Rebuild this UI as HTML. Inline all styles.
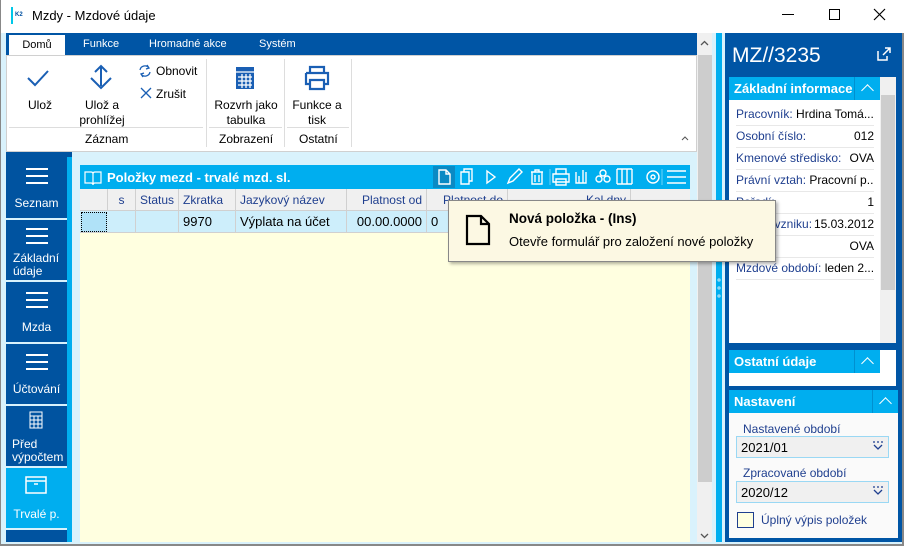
<!DOCTYPE html>
<html><head><meta charset="utf-8"><style>
*{box-sizing:border-box;margin:0;padding:0}
body{width:904px;height:546px;overflow:hidden;background:#fff;font-family:"Liberation Sans",sans-serif;font-size:12px;color:#000;position:relative}
.a{position:absolute}
.nav{left:6px;width:61px;background:#0053a0;color:#fff;text-align:center;font-size:12px;border-bottom:2px solid #d9f2fc}
.lines{position:absolute;left:20px;width:22px;height:16px;border-top:2px solid #fff;border-bottom:2px solid #fff}
.lines:after{content:"";position:absolute;left:0;right:0;top:5px;border-top:2px solid #fff}
.th{position:absolute;top:189px;height:22px;line-height:22px;color:#1f3f8f;border-right:1px solid #d0d0d0;padding:0 4px;font-size:12px}
.td{position:absolute;top:211px;height:22px;line-height:22px;border-right:1px solid #d0d0d0;padding:0 4px;font-size:13px}
.lbl{position:absolute;left:736px;width:138px;height:22px;line-height:20px;border-bottom:1px solid #e8e8e8;font-size:12px;white-space:nowrap;overflow:hidden}
.lbl span{color:#1f3f8f}
.lbl b{font-weight:normal;position:absolute;right:0}
.sh{position:absolute;left:729px;height:23px;background:#00aeef;color:#fff;font-weight:bold;font-size:13px;line-height:23px;padding-left:5px}
.chev{position:absolute;right:0;top:0;width:26px;height:23px;border-left:1px solid #0090d0}
.chev:after{content:"";position:absolute;left:8px;top:9px;width:8px;height:8px;border-left:1.5px solid #fff;border-top:1.5px solid #fff;transform:rotate(45deg)}
</style></head><body>
<!-- title bar -->
<div class="a" style="left:0;top:0;width:904px;height:33px;background:#fff;border-left:1px solid #888"></div>
<div class="a" style="left:11px;top:7px;width:15px;height:17px;border-left:2px solid #00c8e8;font-size:6px;font-weight:bold;color:#0050a0;padding-left:2px;line-height:17px">K2</div>
<div class="a" style="left:32px;top:8px;font-size:13px">Mzdy - Mzdové údaje</div>
<div class="a" style="left:782px;top:14px;width:12px;border-top:1px solid #000"></div>
<div class="a" style="left:829px;top:9px;width:11px;height:11px;border:1px solid #000"></div>
<svg class="a" style="left:873px;top:8px" width="13" height="13"><path d="M1 1L12 12M12 1L1 12" stroke="#000" stroke-width="1.2"/></svg>
<div class="a" style="left:0;top:33px;width:904px;height:513px;background:#d9f2fc;border-left:1px solid #888;border-right:2px solid #888;border-bottom:2px solid #888"></div>
<!-- ribbon -->
<div class="a" style="left:6px;top:33px;width:691px;height:22px;background:#0055a5"></div>
<div class="a" style="left:9px;top:35px;width:56px;height:20px;background:#fff;text-align:center;line-height:20px;font-size:11px">Domů</div>
<div class="a" style="left:83px;top:38px;color:#fff;font-size:11px">Funkce</div>
<div class="a" style="left:149px;top:38px;color:#fff;font-size:11px">Hromadné akce</div>
<div class="a" style="left:259px;top:38px;color:#fff;font-size:11px">Systém</div>
<div class="a" style="left:6px;top:55px;width:691px;height:97px;background:#fff;border:1px solid #d0d0d0"></div>
<svg class="a" style="left:26px;top:68px" width="24" height="20"><path d="M2 10 L9 17 L22 3" stroke="#1a5fb4" stroke-width="2" fill="none"/></svg>
<div class="a" style="left:28px;top:98px;font-size:12px">Ulož</div>
<svg class="a" style="left:89px;top:64px" width="24" height="28"><path d="M12 2 V22 M6 8 L12 2 L18 8 M2 14 L12 24 L22 14" stroke="#1a5fb4" stroke-width="2" fill="none"/></svg>
<div class="a" style="left:78px;top:98px;font-size:12px;text-align:center;width:48px;line-height:15px">Ulož a prohlížej</div>
<svg class="a" style="left:138px;top:64px" width="14" height="14"><path d="M2 6A5 5 0 0 1 11 4M12 8A5 5 0 0 1 3 10M9 1L11 4L8 5M5 13L3 10L6 9" stroke="#1a5fb4" stroke-width="1.3" fill="none"/></svg>
<div class="a" style="left:156px;top:64px">Obnovit</div>
<svg class="a" style="left:140px;top:87px" width="12" height="12"><path d="M1 1L11 11M11 1L1 11" stroke="#1a5fb4" stroke-width="1.3"/></svg>
<div class="a" style="left:156px;top:87px">Zrušit</div>
<div class="a" style="left:9px;top:127px;width:194px;border-top:1px solid #ddd"></div>
<div class="a" style="left:85px;top:132px">Záznam</div>
<div class="a" style="left:206px;top:59px;height:88px;border-left:1px solid #ddd"></div>
<svg class="a" style="left:235px;top:66px" width="20" height="24"><rect x="1" y="1" width="18" height="22" fill="#1a5fb4"/><path d="M1 6H19 M3 11H17 M3 15H17 M3 19H17 M7 8V22 M11 8V22 M15 8V22" stroke="#fff" stroke-width="1.3"/></svg>
<div class="a" style="left:212px;top:98px;width:68px;text-align:center;line-height:15px">Rozvrh jako tabulka</div>
<div class="a" style="left:209px;top:127px;width:73px;border-top:1px solid #ddd"></div>
<div class="a" style="left:219px;top:132px">Zobrazení</div>
<div class="a" style="left:284px;top:59px;height:88px;border-left:1px solid #ddd"></div>
<svg class="a" style="left:303px;top:65px" width="28" height="26"><path d="M7 8V2H21V8 M3 8H25V19H21 M7 19H3V8 M7 15H21V24H7Z" stroke="#1a5fb4" stroke-width="2.2" fill="none"/></svg>
<div class="a" style="left:288px;top:98px;width:58px;text-align:center;line-height:15px">Funkce a tisk</div>
<div class="a" style="left:287px;top:127px;width:62px;border-top:1px solid #ddd"></div>
<div class="a" style="left:299px;top:132px">Ostatní</div>
<div class="a" style="left:351px;top:59px;height:88px;border-left:1px solid #ddd"></div>
<svg class="a" style="left:681px;top:135px" width="8" height="6"><path d="M1 5L4 2L7 5" stroke="#555" fill="none"/></svg>
<!-- scrollbar -->
<div class="a" style="left:697px;top:33px;width:15px;height:509px;background:#f0f0f0"></div>
<div class="a" style="left:698px;top:55px;width:14px;height:427px;background:#cdcdcd"></div>
<svg class="a" style="left:700px;top:40px" width="9" height="6"><path d="M1 5L4.5 1.5L8 5" stroke="#555" stroke-width="1.3" fill="none"/></svg>
<svg class="a" style="left:700px;top:533px" width="9" height="6"><path d="M1 1L4.5 4.5L8 1" stroke="#555" stroke-width="1.3" fill="none"/></svg>
<!-- left nav -->
<div class="a" style="left:6px;top:152px;width:66px;height:6px;background:#0053a0"></div>
<div class="a" style="left:67px;top:157px;width:5px;height:385px;background:#00aeef"></div>
<div class="a nav" style="top:158px;height:62px"><div class="lines" style="top:10px"></div><div style="position:absolute;top:38px;width:100%">Seznam</div></div>
<div class="a nav" style="top:220px;height:62px;text-align:left;padding-left:7px"><div class="lines" style="top:8px"></div><div style="position:absolute;top:32px;line-height:13px">Základní<br>údaje</div></div>
<div class="a nav" style="top:282px;height:62px"><div class="lines" style="top:10px"></div><div style="position:absolute;top:38px;width:100%">Mzda</div></div>
<div class="a nav" style="top:344px;height:62px"><div class="lines" style="top:10px"></div><div style="position:absolute;top:38px;width:100%">Účtování</div></div>
<div class="a nav" style="top:406px;height:62px;text-align:left;padding-left:6px"><svg style="position:absolute;left:23px;top:5px" width="14" height="18"><rect x="1" y="1" width="12" height="16" fill="none" stroke="#fff"/><path d="M1 5H13M1 9H13M1 13H13M5 5V17M9 5V17" stroke="#fff"/></svg><div style="position:absolute;top:32px;line-height:13px">Před<br>výpočtem</div></div>
<div class="a nav" style="top:468px;height:62px;background:#00aeef"><svg style="position:absolute;left:19px;top:8px" width="22" height="18"><rect x="1" y="1" width="20" height="16" fill="none" stroke="#fff" stroke-width="1.5"/><path d="M1 5H21M9 8H13" stroke="#fff" stroke-width="1.5"/></svg><div style="position:absolute;top:39px;width:100%">Trvalé p.</div></div>
<div class="a nav" style="top:530px;height:12px;border:none"></div>
<!-- grid -->
<div class="a" style="left:80px;top:165px;width:610px;height:377px;background:#ffffe0"></div>
<div class="a" style="left:80px;top:165px;width:610px;height:24px;background:#00aeef"></div>
<svg class="a" style="left:84px;top:170px" width="18" height="16"><path d="M1 2H7Q9 2 9 4V15Q9 13 7 13H1Z M17 2H11Q9 2 9 4V15Q9 13 11 13H17Z" stroke="#fff" stroke-width="1.2" fill="none"/></svg>
<div class="a" style="left:107px;top:170px;color:#fff;font-weight:bold;font-size:13px">Položky mezd - trvalé mzd. sl.</div>
<div class="a" style="left:433px;top:166px;width:22px;height:22px;background:#0a8ac4"></div>
<svg class="a" style="left:433px;top:166px" width="257" height="22"><g stroke="#fff" stroke-width="1.4" fill="none">
<path d="M6 4H13L17 8V18H6Z M13 4V8H17"/>
<path d="M28 6H36V18H28Z M31 6V3H39V15H36"/>
<path d="M54 5L62 11L54 17Z"/>
<path d="M75 17L77 12L86 3L89 6L80 15Z"/>
<path d="M98 6H110M102 6V4H106V6M99 6V18H109V6M102 9V16M106 9V16"/>
<line x1="117" y1="3" x2="117" y2="19" stroke="#4fc8f5"/>
<path d="M123 8V3H133V8M120 8H136V16H120ZM123 13H133V19H123Z"/>
<path d="M143 6V17H153V6M146 10V17M150 4V17"/>
<circle cx="170" cy="7" r="3"/><circle cx="166" cy="13" r="3"/><circle cx="174" cy="13" r="3"/>
<path d="M184 3V18M189 3V18M194 3V18M199 3V18M184 3H199M184 18H199"/>
<circle cx="220" cy="11" r="6"/><circle cx="220" cy="11" r="2"/>
<line x1="229" y1="3" x2="229" y2="19" stroke="#4fc8f5"/>
<path d="M234 5H253M234 11H253M234 17H253"/></g></svg>
<div class="a" style="left:80px;top:189px;width:610px;height:22px;background:#f0f0f0;border-bottom:1px solid #d0d0d0"></div>
<div class="th" style="left:80px;width:28px"></div>
<div class="th" style="left:108px;width:28px;text-align:center">s</div>
<div class="th" style="left:136px;width:43px">Status</div>
<div class="th" style="left:179px;width:57px">Zkratka</div>
<div class="th" style="left:236px;width:111px">Jazykový název</div>
<div class="th" style="left:347px;width:80px;text-align:right">Platnost od</div>
<div class="th" style="left:427px;width:81px;text-align:right">Platnost do</div>
<div class="th" style="left:508px;width:123px;text-align:right">Kal.dny</div>
<div class="a" style="left:80px;top:211px;width:610px;height:22px;background:#cdeefb;border-bottom:1px solid #d0d0d0"></div>
<div class="a" style="left:81px;top:212px;width:26px;height:20px;background:#b0e2f8;border:1px dotted #000"></div>
<div class="td" style="left:108px;width:28px"></div>
<div class="td" style="left:136px;width:43px"></div>
<div class="td" style="left:179px;width:57px">9970</div>
<div class="td" style="left:236px;width:111px">Výplata na účet</div>
<div class="td" style="left:347px;width:80px;text-align:right">00.00.0000</div>
<div class="td" style="left:427px;width:81px">0</div>
<!-- right panel -->
<div class="a" style="left:716px;top:33px;width:6px;height:509px;background:#00aeef"></div>
<div class="a" style="left:717px;top:276px;width:4px;height:25px;background:radial-gradient(circle,#8fd8f5 1.5px,transparent 2px) 0 0/4px 8px"></div>
<div class="a" style="left:725px;top:33px;width:177px;height:509px;background:#0055a5"></div>
<div class="a" style="left:732px;top:44px;color:#fff;font-size:21px">MZ//3235</div>
<svg class="a" style="left:877px;top:47px" width="14" height="14"><path d="M1 4V13H10V9 M6 8L13 1M8 1H13V6" stroke="#fff" stroke-width="1.5" fill="none"/></svg>
<div class="a" style="left:729px;top:77px;width:167px;height:266px;background:#fff"></div>
<div class="sh" style="top:77px;width:151px">Základní informace<div class="chev"></div></div>
<div class="a" style="left:880px;top:77px;width:16px;height:266px;background:#f0f0f0"></div>
<div class="a" style="left:881px;top:95px;width:14px;height:195px;background:#cdcdcd"></div>
<div class="lbl" style="top:104px"><span>Pracovník:</span> Hrdina Tomá...</div>
<div class="lbl" style="top:126px"><span>Osobní číslo:</span><b>012</b></div>
<div class="lbl" style="top:148px"><span>Kmenové středisko:</span><b>OVA</b></div>
<div class="lbl" style="top:170px"><span>Právní vztah:</span> Pracovní p...</div>
<div class="lbl" style="top:192px"><span>Pořadí:</span><b>1</b></div>
<div class="lbl" style="top:214px"><span>Datum vzniku:</span><b>15.03.2012</b></div>
<div class="lbl" style="top:236px"><span>Útvar:</span><b>OVA</b></div>
<div class="lbl" style="top:258px"><span>Mzdové období:</span> leden 2...</div>
<div class="a" style="left:729px;top:350px;width:167px;height:36px;background:#fff"></div>
<div class="sh" style="top:350px;width:151px">Ostatní údaje<div class="chev"></div></div>
<div class="a" style="left:729px;top:390px;width:169px;height:148px;background:#fafafa"></div>
<div class="sh" style="top:390px;width:169px">Nastavení<div class="chev"></div></div>
<div class="a" style="left:743px;top:422px;color:#1f3f8f;font-size:12px">Nastavené období</div>
<div class="a" style="left:736px;top:436px;width:153px;height:22px;background:#f0f0f0;border:1px solid #9ad8f4;padding:3px 4px;font-size:13px">2021/01</div>
<svg class="a" style="left:872px;top:441px" width="12" height="10"><path d="M1 1H3M5 1H7M9 1H11M2 4L6 8L10 4" stroke="#1f3f8f" stroke-width="1.3" fill="none"/></svg>
<div class="a" style="left:743px;top:466px;color:#1f3f8f;font-size:12px">Zpracované období</div>
<div class="a" style="left:736px;top:481px;width:153px;height:22px;background:#f0f0f0;border:1px solid #9ad8f4;padding:3px 4px;font-size:13px">2020/12</div>
<svg class="a" style="left:872px;top:486px" width="12" height="10"><path d="M1 1H3M5 1H7M9 1H11M2 4L6 8L10 4" stroke="#1f3f8f" stroke-width="1.3" fill="none"/></svg>
<div class="a" style="left:737px;top:512px;width:17px;height:16px;background:#ffffe0;border:1px solid #1f3f8f"></div>
<div class="a" style="left:761px;top:513px;color:#1f3f8f;font-size:12px">Úplný výpis položek</div>
<!-- tooltip -->
<div class="a" style="left:448px;top:200px;width:328px;height:62px;background:#fcf8e3;border:1px solid #888;box-shadow:2px 2px 3px rgba(0,0,0,.3)"></div>
<svg class="a" style="left:465px;top:214px" width="26" height="32"><path d="M2 2H16L24 10V30H2Z M16 2V10H24" stroke="#000" stroke-width="2.2" fill="none"/></svg>
<div class="a" style="left:509px;top:211px;font-weight:bold;font-size:13.5px">Nová položka - (Ins)</div>
<div class="a" style="left:509px;top:234px;font-size:13px">Otevře formulář pro založení nové položky</div>
</body></html>
